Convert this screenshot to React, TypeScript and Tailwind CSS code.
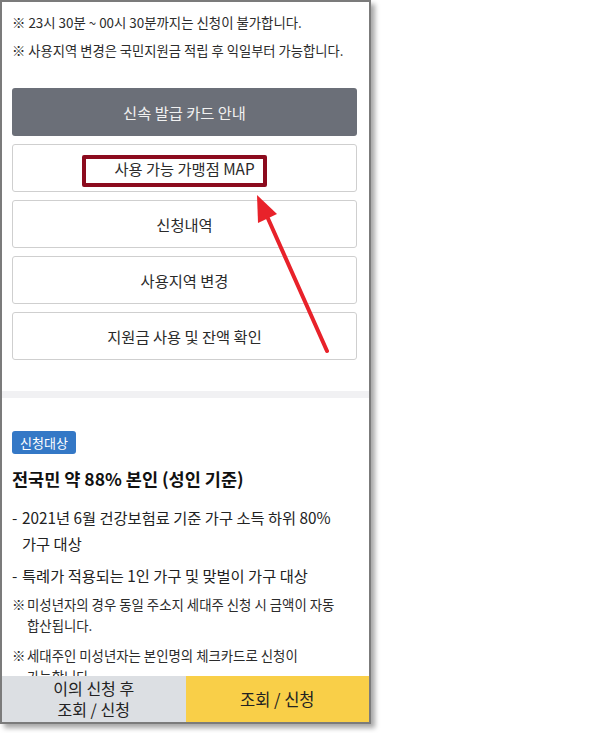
import type { ReactNode } from "react";

const FONT = { fontFamily: '"Noto Sans CJK KR", "Noto Sans", sans-serif' };

function MenuButton({ children, dark = false }: { children: ReactNode; dark?: boolean }) {
  return (
    <div
      className={
        dark
          ? "flex h-[48px] w-[345px] items-center justify-center rounded-[3px] bg-[#6b6f78] text-[15.3px] text-[#f1f1f1]"
          : "flex h-[48px] w-[345px] items-center justify-center rounded-[3px] border border-[#cfcfcf] bg-white text-[15.3px] text-[#2a2a2a]"
      }
    >
      {children}
    </div>
  );
}

function Note({ children }: { children: ReactNode }) {
  return (
    <div className="flex break-keep text-[13.4px] leading-[21px] text-[#2b2b2b]">
      <span className="w-[15px] shrink-0">※</span>
      <span>{children}</span>
    </div>
  );
}

function Bullet({ children }: { children: ReactNode }) {
  return (
    <div className="flex break-keep text-[15.3px] leading-[26px] text-[#222]">
      <span className="w-[10px] shrink-0">-</span>
      <span>{children}</span>
    </div>
  );
}

export default function App() {
  return (
    <div className="min-h-[733px] w-[603px] bg-white" style={FONT}>
      <div className="relative flex h-[724px] w-[371px] flex-col overflow-hidden border-2 border-[#7b7b7b] bg-white shadow-[4px_4px_5px_rgba(0,0,0,0.35)]">
        <div className="flex-1 overflow-hidden">
          <div className="break-keep px-[10px] pt-[10px]">
            <div className="text-[13.4px] leading-[20px] text-[#2b2b2b]">※ 23시 30분 ~ 00시 30분까지는 신청이 불가합니다.</div>
            <div className="mt-[9px] text-[13.3px] leading-[20px] text-[#2b2b2b]">※ 사용지역 변경은 국민지원금 적립 후 익일부터 가능합니다.</div>
          </div>

          <div className="mt-[27px] flex flex-col gap-[8px] px-[10px]">
            <MenuButton dark>신속 발급 카드 안내</MenuButton>
            <MenuButton>사용 가능 가맹점 MAP</MenuButton>
            <MenuButton>신청내역</MenuButton>
            <MenuButton>사용지역 변경</MenuButton>
            <MenuButton>지원금 사용 및 잔액 확인</MenuButton>
          </div>

          <div className="mt-[31px] h-[7px] bg-[#f1f1f3]" />

          <div className="px-[10px] pt-[31px]">
            <span className="inline-flex h-[23px] items-center rounded-[3px] bg-[#3478c6] px-[8px] text-[13px] text-white">
              신청대상
            </span>
            <div className="mt-[13px] text-[17.5px] font-bold leading-[24px] text-[#111]">전국민 약 88% 본인 (성인 기준)</div>
            <div className="mt-[13px]">
              <Bullet>2021년 6월 건강보험료 기준 가구 소득 하위 80% 가구 대상</Bullet>
            </div>
            <div className="mt-[6px]">
              <Bullet>특례가 적용되는 1인 가구 및 맞벌이 가구 대상</Bullet>
            </div>
            <div className="mt-[6px]">
              <Note>미성년자의 경우 동일 주소지 세대주 신청 시 금액이 자동 합산됩니다.</Note>
            </div>
            <div className="mt-[9px]">
              <Note>세대주인 미성년자는 본인명의 체크카드로 신청이 가능합니다.</Note>
            </div>
          </div>
        </div>

        <div className="flex h-[46px] shrink-0">
          <div className="flex flex-1 flex-col items-center justify-center bg-[#dcdfe3] text-[16px] leading-[21px] text-[#222]">
            <span>이의 신청 후</span>
            <span>조회 / 신청</span>
          </div>
          <div className="flex flex-1 items-center justify-center bg-[#f9cf48] text-[16.5px] text-[#222]">조회 / 신청</div>
        </div>

        {/* annotation: highlight box */}
        <div className="absolute left-[80px] top-[153px] h-[32px] w-[185px] rounded-[2px] border-[4px] border-[#8c0b1e]" />

        {/* annotation: arrow */}
        <svg className="pointer-events-none absolute left-[-2px] top-[-2px]" width="371" height="724" viewBox="0 0 371 724">
          <line x1="327" y1="351" x2="266" y2="214" stroke="#e8222a" strokeWidth="4" strokeLinecap="round" />
          <polygon points="257,195 277,214 258,223" fill="#e8222a" />
        </svg>
      </div>
    </div>
  );
}
